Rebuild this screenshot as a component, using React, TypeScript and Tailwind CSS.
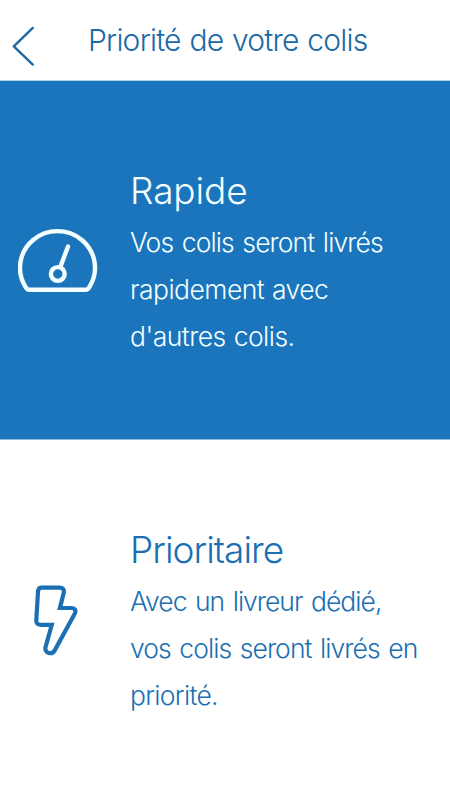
function ChevronLeft() {
  return (
    <svg viewBox="0 0 24 42" className="h-[42px] w-6" fill="none" stroke="currentColor" strokeWidth="2.4" strokeLinecap="round" strokeLinejoin="round">
      <path d="M21.8 2.9 2.8 21.4 21.8 39.6" />
    </svg>
  );
}

function GaugeIcon() {
  return (
    <svg viewBox="0 0 80 66" className="h-[66px] w-20" fill="none" stroke="currentColor" strokeWidth="4.4" strokeLinecap="round" strokeLinejoin="round">
      <path d="M11.5 61.7H67.5Q70 61.7 71.4 59A37.5 36.6 0 1 0 7.6 59Q9 61.7 11.5 61.7Z" />
      <path d="M50 18.5 42.6 38.3" />
      <circle cx="39.8" cy="46" r="6.9" />
    </svg>
  );
}

function BoltIcon() {
  return (
    <svg viewBox="0 0 46 74" className="h-[74px] w-[46px]" fill="none" stroke="currentColor" strokeWidth="4.2">
      <path d="M8.5 3.6H26.5Q31.6 3.6 30.8 8.5L26.9 24H38.5Q44 24.4 41.9 29.4L22.2 65.5C19 72 11.2 69 12.5 63.2L18.8 40.8H7.5Q3.1 40.8 3.3 36.3L5 7.5Q5.4 3.6 8.5 3.6Z" />
    </svg>
  );
}

const options = [
  {
    title: "Rapide",
    titleClass: "tracking-[-0.1px]",
    panelClass: "h-[359px] border-b border-[#8dbcdf] bg-[#1b75bc] pt-[85px] text-[#f4ffff]",
    icon: <GaugeIcon />,
    iconClass: "w-[112px] pl-[18px] pt-[62px]",
    lines: [
      { text: "Vos colis seront livrés", className: "tracking-[-0.9px] [word-spacing:2px]" },
      { text: "rapidement avec", className: "tracking-[-0.54px] [word-spacing:1px]" },
      { text: "d'autres colis.", className: "tracking-[-0.52px] [word-spacing:1px]" },
    ],
  },
  {
    title: "Prioritaire",
    titleClass: "tracking-[-1px]",
    panelClass: "h-[360px] bg-white pt-[85px] text-[#1b6fb2]",
    icon: <BoltIcon />,
    iconClass: "w-[112px] pl-[33px] pt-[59px]",
    lines: [
      { text: "Avec un livreur dédié,", className: "tracking-[-0.98px] [word-spacing:2px]" },
      { text: "vos colis seront livrés en", className: "tracking-[-0.93px] [word-spacing:2px]" },
      { text: "priorité.", className: "tracking-[-0.7px]" },
    ],
  },
];

export default function App() {
  return (
    <main className="h-[800px] w-[450px] overflow-hidden bg-white font-['Inter',sans-serif] font-light">
      <header className="flex h-[81px] border-b border-[#b5d5ea] text-[#1b6aa8]">
        <button className="ml-[11px] mt-[25px] h-[42px] w-6">
          <ChevronLeft />
        </button>
        <h1 className="ml-[53px] mt-[20px] whitespace-nowrap text-[30px] leading-[40px] tracking-[-0.77px] [word-spacing:1px]">
          Priorité de votre colis
        </h1>
      </header>

      {options.map((option) => (
        <section key={option.title} className={`flex ${option.panelClass}`}>
          <div className={`shrink-0 ${option.iconClass}`}>{option.icon}</div>
          <div className="ml-[18px] whitespace-nowrap">
            <h2 className={`text-[37px] leading-[50px] ${option.titleClass}`}>{option.title}</h2>
            <div className="mt-[3px] text-[26.5px] leading-[46.8px]">
              {option.lines.map((line) => (
                <p key={line.text}>
                  <span className={line.className}>{line.text}</span>
                </p>
              ))}
            </div>
          </div>
        </section>
      ))}
    </main>
  );
}
